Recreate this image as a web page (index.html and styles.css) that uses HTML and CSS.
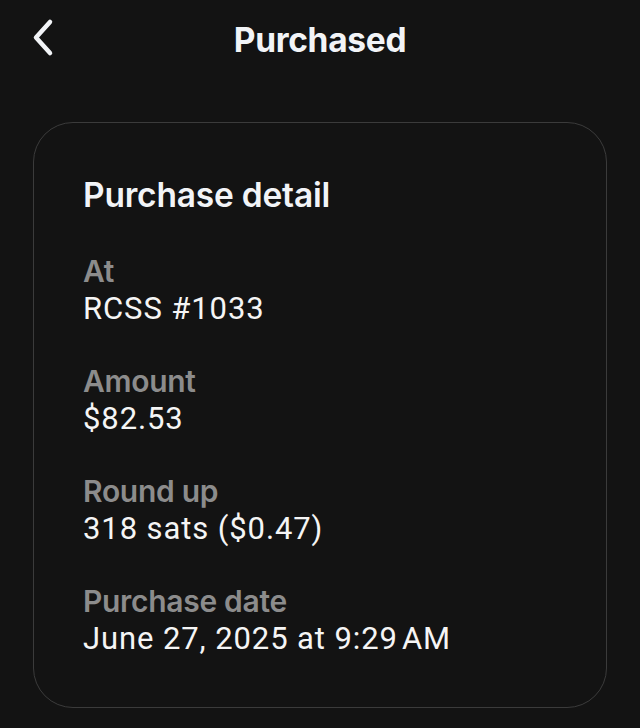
FILE: index.html
```html
<!DOCTYPE html>
<html>
  <head>
    <meta name="viewport" content="width=device-width, initial-scale=1" />
    <link rel="stylesheet" href="styles.css">
  </head>
  <body>
    <div class="header">
      <button class="back" type="button" aria-label="Back">
        <svg width="30" height="40" viewBox="0 0 30 40">
          <path d="M19 4 L5 19.5 L19 35" fill="none" stroke="#f2f4f7" stroke-width="4.5" stroke-linecap="round" stroke-linejoin="round" />
        </svg>
      </button>
      <h1 class="title">Purchased</h1>
    </div>

    <div class="card">
      <h2 class="card-title">Purchase detail</h2>

      <div class="row">
        <div class="label">At</div>
        <div class="value">RCSS #1033</div>
      </div>
      <div class="row">
        <div class="label">Amount</div>
        <div class="value">$82.53</div>
      </div>
      <div class="row">
        <div class="label">Round up</div>
        <div class="value">318 sats ($0.47)</div>
      </div>
      <div class="row">
        <div class="label">Purchase date</div>
        <div class="value">June 27, 2025 at 9:29&#8202;AM</div>
      </div>
    </div>
  </body>
</html>
```

FILE: styles.css
```css
* {
  box-sizing: border-box;
}
body {
  margin: 0;
  background-color: #131313;
  font-family: Inter, "Noto Sans", sans-serif;
  color: #f2f4f7;
  height: 728px;
  overflow: hidden;
}

.header {
  position: relative;
  padding-top: 18px;
  text-align: center;
}
.title {
  margin: 0;
  font-size: 33.5px;
  font-weight: 700;
  line-height: 44px;
  letter-spacing: -0.3px;
}
.back {
  position: absolute;
  left: 31px;
  top: 18px;
  padding: 0;
  border: none;
  background: none;
  cursor: pointer;
}

.card {
  margin: 60px 33px 0;
  height: 586px;
  border: 1.5px solid #3b3b3b;
  border-radius: 40px;
  padding: 50px 49px 0;
  display: flex;
  flex-direction: column;
  row-gap: 34px;
}
.card-title {
  margin: 0 0 1px;
  font-size: 33.5px;
  font-weight: 600;
  line-height: 44px;
  letter-spacing: -0.2px;
}
.label {
  color: #8c8c8c;
  font-size: 30px;
  font-weight: 600;
  line-height: 38px;
  letter-spacing: -0.3px;
}
.value {
  font-family: Roboto, "Liberation Sans", sans-serif;
  color: #f5f5f5;
  font-size: 31px;
  line-height: 38px;
  letter-spacing: 0.9px;
}
```
